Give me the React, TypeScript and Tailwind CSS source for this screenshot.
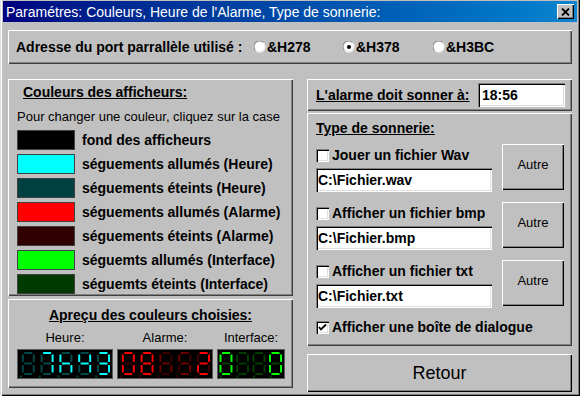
import React from "react";

const raised =
  "bg-[#c0c0c0] shadow-[inset_1px_1px_0_#ffffff,inset_-1px_-1px_0_#000000,inset_-2px_-2px_0_#808080]";
const panel =
  "bg-[#c0c0c0] shadow-[inset_1px_1px_0_#ffffff,inset_-1px_-1px_0_#404040,inset_-2px_-2px_0_#808080]";
const sunken =
  "bg-white shadow-[inset_1px_1px_0_#808080,inset_2px_2px_0_#000000,inset_-1px_-1px_0_#ffffff,inset_-2px_-2px_0_#dfdfdf]";

// segments: a top, b upper right, c lower right, d bottom, e lower left, f upper left, g middle
const SEGMENTS: Record<string, string> = {
  "0": "abcdef",
  "2": "abdeg",
  "3": "abcdg",
  "4": "bcfg",
  "5": "acdfg",
  "7": "abc",
  "8": "abcdefg",
  h: "cefg",
  " ": "",
};

type Digit = { ch: string; mid?: boolean };

function SevenSeg({
  digits,
  pitch,
  on,
  off,
  mid,
}: {
  digits: Digit[];
  pitch: number;
  on: string;
  off: string;
  mid?: string;
}) {
  const w = Math.round(digits.length * pitch);
  return (
    <div className="border border-[#5a5a5a] bg-black">
      <svg width={w} height={28} className="block">
        {digits.map((d, i) => {
          const ox = i * pitch;
          const L = ox + pitch - 14;
          const R = L + 11;
          const T = 3;
          const M = 13.5;
          const B = 24;
          const segs: Record<string, [number, number, number, number]> = {
            a: [L + 1.5, T, R - 1.5, T],
            b: [R, T + 1.5, R, M - 1.5],
            c: [R, M + 1.5, R, B - 1.5],
            d: [L + 1.5, B, R - 1.5, B],
            e: [L, M + 1.5, L, B - 1.5],
            f: [L, T + 1.5, L, M - 1.5],
            g: [L + 1.5, M, R - 1.5, M],
          };
          const lit = SEGMENTS[d.ch] ?? "";
          const litColor = d.mid && mid ? mid : on;
          return (
            <g key={i}>
              {Object.entries(segs).map(([k, [x1, y1, x2, y2]]) => (
                <line
                  key={k}
                  x1={x1}
                  y1={y1}
                  x2={x2}
                  y2={y2}
                  stroke={lit.includes(k) ? litColor : off}
                  strokeWidth={2}
                />
              ))}
              <rect x={ox + 2} y={25.5} width={2} height={2} fill={off} />
            </g>
          );
        })}
      </svg>
    </div>
  );
}

function Radio({ checked, label }: { checked?: boolean; label: string }) {
  return (
    <div className="flex items-center gap-[1px]">
      <svg width={12} height={12} className="block">
        <circle cx={6} cy={6} r={5.5} fill="#ffffff" />
        <path d="M1.5 9.5 A5 5 0 0 1 9.5 1.5" stroke="#808080" strokeWidth={1} fill="none" />
        <path d="M9.5 1.5 A5 5 0 0 1 1.5 9.5" stroke="#dfdfdf" strokeWidth={1} fill="none" />
        {checked && <circle cx={6} cy={6} r={2} fill="#000000" />}
      </svg>
      <span className="text-[14px] leading-[16px] font-bold">{label}</span>
    </div>
  );
}

function Check({ checked, label }: { checked?: boolean; label: string }) {
  return (
    <div className="flex h-[16px] items-center gap-[3px]">
      <div className={`h-[13px] w-[13px] ${sunken}`}>
        {checked && (
          <svg width={13} height={13} className="block">
            <path d="M3 6 L5 8.5 L10 3.5" stroke="#000" strokeWidth={1.8} fill="none" />
          </svg>
        )}
      </div>
      <span className="text-[14px] leading-[16px] font-bold">{label}</span>
    </div>
  );
}

const colours = [
  { c: "bg-[#000000]", t: "fond des afficheurs" },
  { c: "bg-[#00ffff]", t: "séguements allumés (Heure)" },
  { c: "bg-[#004040]", t: "séguements éteints (Heure)" },
  { c: "bg-[#ff0000]", t: "séguements allumés (Alarme)" },
  { c: "bg-[#300000]", t: "séguements éteints (Alarme)" },
  { c: "bg-[#00ff00]", t: "séguemts allumés (Interface)" },
  { c: "bg-[#003a00]", t: "séguemts éteints (Interface)" },
];

const sounds = [
  { label: "Jouer un fichier Wav", path: "C:\\Fichier.wav" },
  { label: "Afficher un fichier bmp", path: "C:\\Fichier.bmp" },
  { label: "Afficher un fichier txt", path: "C:\\Fichier.txt" },
];

export default function App() {
  return (
    <div className="h-[396px] w-[580px] overflow-hidden bg-[#c0c0c0] px-[3px] pt-[1px] font-['Liberation_Sans',Arial,sans-serif] text-black shadow-[inset_1px_0_0_#dfdfdf,inset_2px_0_0_#ffffff,inset_-1px_-1px_0_#000000,inset_-2px_-2px_0_#808080]">
      {/* Title bar */}
      <div className="flex h-[21px] items-center bg-gradient-to-r from-[#000080] to-[#1084d0] pr-[3px] pl-[3px]">
        <span className="text-[14px] leading-[16px] text-white">
          Paramétres: Couleurs, Heure de l'Alarme, Type de sonnerie:
        </span>
        <div className={`ml-auto flex h-[15px] w-[17px] items-center justify-center ${raised}`}>
          <svg width={9} height={8} className="block">
            <path d="M1 0.5 L8 7.5 M8 0.5 L1 7.5" stroke="#000" strokeWidth={1.8} />
          </svg>
        </div>
      </div>

      <div className="px-[5px] pt-[8px]">
        {/* Port address */}
        <div className={`flex h-[34px] items-center pl-[8px] ${panel}`}>
          <div className="w-[238px] text-[14px] leading-[16px] font-bold">
            Adresse du port parrallèle utilisé :
          </div>
          <div className="w-[89px]">
            <Radio label="&H278" />
          </div>
          <div className="w-[90px]">
            <Radio checked label="&H378" />
          </div>
          <Radio label="&H3BC" />
        </div>

        <div className="mt-[15px] flex gap-[14px]">
          {/* Left column */}
          <div className="flex w-[285px] flex-col gap-[3px]">
            <div className={`h-[217px] px-[9px] pt-[5px] ${panel}`}>
              <div className="ml-[6px] text-[14px] leading-[16px] font-bold underline">
                Couleurs des afficheurs:
              </div>
              <div className="mt-[9px] text-[13px] leading-[16px]">
                Pour changer une couleur, cliquez sur la case
              </div>
              <div className="mt-[5px] flex flex-col gap-[4px]">
                {colours.map((r) => (
                  <div key={r.t} className="flex h-[20px] items-center gap-[7px]">
                    <div className={`h-[20px] w-[58px] border border-[#404040] ${r.c}`} />
                    <span className="text-[14px] leading-[16px] font-bold">{r.t}</span>
                  </div>
                ))}
              </div>
            </div>

            <div className={`h-[89px] px-[9px] pt-[8px] ${panel}`}>
              <div className="text-center text-[14px] leading-[16px] font-bold underline">
                Apreçu des couleurs choisies:
              </div>
              <div className="mt-[7px] flex gap-[4px]">
                <div className="flex flex-col items-center">
                  <div className="text-[13px] leading-[16px]">Heure:</div>
                  <div className="mt-[3px]">
                    <SevenSeg
                      pitch={18.8}
                      on="#00ffff"
                      off="#004848"
                      digits={[{ ch: " " }, { ch: "7" }, { ch: "h" }, { ch: "4" }, { ch: "3" }]}
                    />
                  </div>
                </div>
                <div className="flex flex-col items-center">
                  <div className="text-[13px] leading-[16px]">Alarme:</div>
                  <div className="mt-[3px]">
                    <SevenSeg
                      pitch={18.8}
                      on="#ff0000"
                      off="#380000"
                      mid="#6a0000"
                      digits={[
                        { ch: "0" },
                        { ch: "8" },
                        { ch: "h", mid: true },
                        { ch: "5", mid: true },
                        { ch: "2" },
                      ]}
                    />
                  </div>
                </div>
                <div className="flex flex-col items-center">
                  <div className="text-[13px] leading-[16px]">Interface:</div>
                  <div className="mt-[3px]">
                    <SevenSeg
                      pitch={16.5}
                      on="#00ff00"
                      off="#003c00"
                      digits={[{ ch: "0" }, { ch: " " }, { ch: " " }, { ch: "0" }]}
                    />
                  </div>
                </div>
              </div>
            </div>
          </div>

          {/* Right column */}
          <div className="flex w-[265px] flex-col">
            <div className={`flex h-[32px] items-center justify-between pr-[7px] pl-[9px] ${panel}`}>
              <span className="text-[14px] leading-[16px] font-bold underline">L'alarme doit sonner à:</span>
              <div className={`flex h-[24px] w-[87px] items-center px-[4px] text-[14px] font-bold ${sunken}`}>
                18:56
              </div>
            </div>

            <div className={`mt-[2px] h-[233px] pl-[9px] pt-[7px] ${panel}`}>
              <div className="text-[14px] leading-[16px] font-bold underline">Type de sonnerie:</div>
              <div className="mt-[8px] flex flex-col gap-[10px]">
                {sounds.map((s) => (
                  <div key={s.label} className="flex items-start gap-[10px]">
                    <div className="w-[176px] pt-[3px]">
                      <Check label={s.label} />
                      <div className={`mt-[5px] flex h-[24px] items-center px-[2px] text-[14px] font-bold ${sunken}`}>
                        {s.path}
                      </div>
                    </div>
                    <div className={`flex h-[46px] w-[62px] items-center justify-center pb-[4px] text-[13px] ${raised}`}>
                      Autre
                    </div>
                  </div>
                ))}
              </div>
              <div className="mt-[11px]">
                <Check checked label="Afficher une boîte de dialogue" />
              </div>
            </div>

            <div className={`mt-[8px] flex h-[38px] items-center justify-center text-[18px] ${raised}`}>
              Retour
            </div>
          </div>
        </div>
      </div>
    </div>
  );
}
